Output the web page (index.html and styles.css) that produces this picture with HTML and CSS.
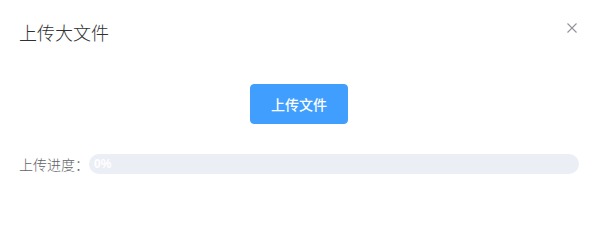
FILE: index.html
```html
<!DOCTYPE html>
<html lang="zh-CN">
<head>
<meta charset="utf-8">
<title>上传大文件</title>
<link rel="stylesheet" href="styles.css">
</head>
<body>
<div class="dialog">
  <div class="dialog-header">
    <span class="dialog-title">上传大文件</span>
    <button class="dialog-close" aria-label="Close">
      <svg width="10" height="10" viewBox="0 0 10 10"><path d="M0.5 0.5 L9.5 9.5 M9.5 0.5 L0.5 9.5" stroke="#909399" stroke-width="1.1" fill="none"/></svg>
    </button>
  </div>
  <div class="dialog-body">
    <div class="upload-row">
      <button class="btn-primary">上传文件</button>
    </div>
    <div class="progress-row">
      <span class="progress-label">上传进度：</span>
      <div class="progress-track">
        <div class="progress-inner" style="width:0%">
          <span class="progress-text">0%</span>
        </div>
      </div>
    </div>
  </div>
</div>
</body>
</html>
```
FILE: styles.css
```css
* { box-sizing: border-box; }
html, body { margin: 0; padding: 0; background: #fff; }
body {
  font-family: "Liberation Sans", "Noto Sans CJK SC", sans-serif;
  width: 598px;
  height: 233px;
  overflow: hidden;
}
.dialog {
  position: relative;
  width: 598px;
  height: 233px;
  background: #fff;
}
.dialog-header {
  padding: 20px 19px 10px 19px;
  height: 54px;
}
.dialog-title {
  display: block;
  font-family: "Noto Sans CJK SC", sans-serif;
  font-size: 18px;
  font-weight: 300;
  line-height: 24px;
  color: #303133;
}
.dialog-close {
  position: absolute;
  top: 23px;
  right: 21px;
  width: 10px;
  height: 10px;
  padding: 0;
  border: 0;
  background: transparent;
  display: flex;
}
.dialog-body {
  padding: 30px 19px 0 19px;
}
.upload-row {
  display: flex;
  justify-content: center;
}
.btn-primary {
  height: 40px;
  width: 98px;
  padding: 0;
  border: 1px solid #409eff;
  border-radius: 4px;
  background: #409eff;
  color: #fff;
  font-family: "Noto Sans CJK SC", sans-serif;
  font-size: 14px;
  font-weight: 500;
  line-height: 38px;
  display: flex;
  justify-content: center;
  align-items: center;
}
.progress-row {
  margin-top: 30px;
  display: flex;
  align-items: center;
  height: 20px;
}
.progress-label {
  flex: none;
  width: 70px;
  font-family: "Noto Sans CJK SC", sans-serif;
  font-size: 14px;
  font-weight: 300;
  line-height: 20px;
  color: #606266;
}
.progress-track {
  flex: 1;
  height: 20px;
  border-radius: 100px;
  background: #ebeef5;
  display: flex;
  overflow: hidden;
}
.progress-inner {
  height: 20px;
  display: flex;
  align-items: center;
  white-space: nowrap;
  overflow: visible;
}
.progress-text {
  margin-left: 5px;
  font-family: "Liberation Sans", sans-serif;
  font-size: 12px;
  font-weight: 700;
  line-height: 12px;
  color: #fff;
}
```
